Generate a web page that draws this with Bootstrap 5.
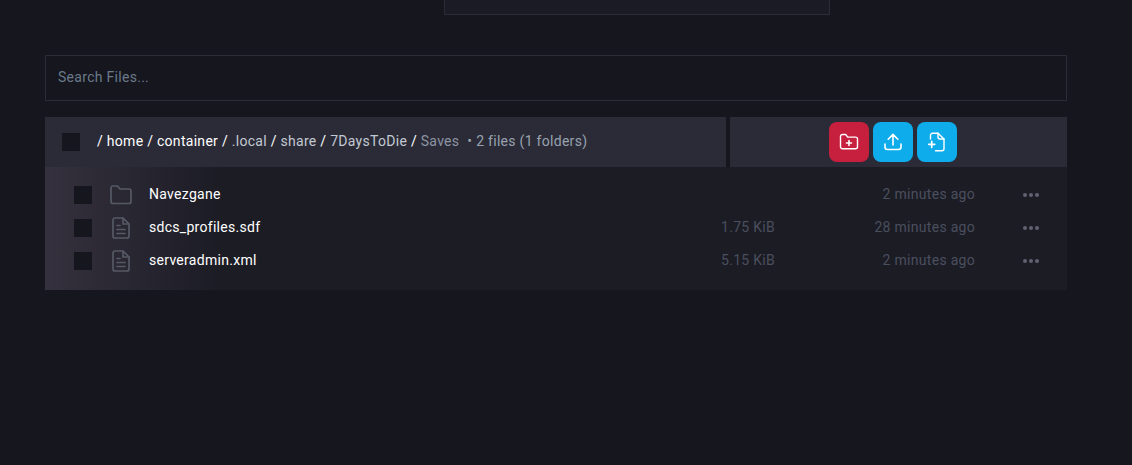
<!doctype html>
<html lang="en">
<head>
<meta charset="utf-8">
<title>Files</title>
<link href="https://cdn.jsdelivr.net/npm/bootstrap@5.3.0/dist/css/bootstrap.min.css" rel="stylesheet">
<style>
html,body{height:100%}
body{background:#15161e;font-family:Roboto,"Liberation Sans",sans-serif;font-size:14px;letter-spacing:.29px;color:#fff;overflow:hidden}
.fm-wrap{width:1022px;margin-left:45px}
.fm-topbox{width:386px;height:15px;margin-left:399px;background:#1a1b25;border:1px solid #2c2c38;border-top:0}
.fm-search{margin-top:40px;height:46px;background:#15161e;border:1px solid #2c2c38;border-radius:0;padding:0 12px 2px;font-size:14px;letter-spacing:.29px;color:#fff}
.fm-search::placeholder{color:#6b7a8a;opacity:1}
.fm-search:focus{background:#15161e;border-color:#2c2c38;box-shadow:none;color:#fff}
.fm-head{margin-top:16px;height:50px;gap:4px}
.fm-crumbs{width:681px;background:#2b2b37;padding-left:17px}
.fm-actions{flex:1;background:#2b2b37;padding-right:11px;gap:4px}
.fm-check{width:18px;height:18px;background:#15161e;flex:none}
.fm-path{margin-left:17px;color:#fff;white-space:nowrap;padding-bottom:2px}
.fm-path .fm-dim{color:#c3c9d2}
.fm-path .fm-cur{color:#8b95a3}
.fm-path .fm-count{color:#98a2b0;margin-left:8px}
.fm-btn{width:40px;height:40px;border:0;border-radius:8px;padding:0;color:#fff}
.fm-red{background:#c71f3e}
.fm-blue{background:#0faceb}
.fm-list{background:linear-gradient(90deg,#35313e 0,#1c1c25 175px);padding:11px 0 13px}
.fm-row{height:33px;padding-left:29px}
.fm-row .fm-check{margin-right:18px}
.fm-ico{width:22px;color:#555965;flex:none;margin-right:17px}
.fm-name{width:420px;color:#fff}
.fm-size{width:206px;text-align:right;color:#4a4f5e}
.fm-date{width:200px;text-align:right;color:#4a4f5e}
.fm-dots{margin-left:48px;width:16px;color:#5f6270}
</style>
</head>
<body>
<div class="fm-wrap">
  <div class="fm-topbox"></div>
  <input class="form-control fm-search" type="text" placeholder="Search Files...">
  <div class="d-flex fm-head">
    <div class="d-flex align-items-center fm-crumbs">
      <span class="fm-check"></span>
      <div class="fm-path">/ home / container / <span class="fm-dim">.local</span> / <span class="fm-dim">share</span> / <span class="fm-dim">7DaysToDie</span> / <span class="fm-cur">Saves</span><span class="fm-count">• 2 files (1 folders)</span></div>
    </div>
    <div class="d-flex align-items-center justify-content-center fm-actions">
      <button class="btn fm-btn fm-red d-flex align-items-center justify-content-center" aria-label="New folder">
        <svg width="20" height="20" viewBox="0 0 20 20" fill="none" stroke="currentColor" stroke-width="1.400" stroke-linejoin="round" stroke-linecap="round"><path d="M1.500 4.500a2 2 0 0 1 2-2h3.200l2 2.600h7.800a2 2 0 0 1 2 2v7.700a2 2 0 0 1-2 2h-13a2 2 0 0 1-2-2z"/><path d="M10 8.500v5M7.500 11h5" stroke-width="1.600"/></svg>
      </button>
      <button class="btn fm-btn fm-blue d-flex align-items-center justify-content-center" aria-label="Upload">
        <svg width="20" height="20" viewBox="0 0 20 20" fill="none" stroke="currentColor" stroke-width="1.600" stroke-linejoin="round" stroke-linecap="round"><path d="M2 12v3a2.500 2.500 0 0 0 2.500 2.500h11a2.500 2.500 0 0 0 2.500-2.500v-3"/><path d="M10 13V2.500M5.200 7.200 10 2.400l4.800 4.800"/></svg>
      </button>
      <button class="btn fm-btn fm-blue d-flex align-items-center justify-content-center" aria-label="New file">
        <svg width="20" height="20" viewBox="0 0 20 20" fill="none" stroke="currentColor" stroke-width="1.400" stroke-linejoin="round" stroke-linecap="round"><path d="M3.500 7V3.300a2 2 0 0 1 2-2h5.500L17 7v9.700a2 2 0 0 1-2 2H8.500"/><path d="M11 1.300V5a2 2 0 0 0 2 2h4"/><path d="M4.700 9.300v6M1.700 12.300h6" stroke-width="1.700"/></svg>
      </button>
    </div>
  </div>
  <div class="fm-list">
    <div class="d-flex align-items-center fm-row">
      <span class="fm-check"></span>
      <span class="fm-ico"><svg class="d-block" width="22" height="20" viewBox="0 0 22 20" fill="none" stroke="currentColor" stroke-width="1.700" stroke-linejoin="round"><path d="M1 3a2 2 0 0 1 2-2h4.500l2.500 3h9a2 2 0 0 1 2 2v10.500a2 2 0 0 1-2 2H3a2 2 0 0 1-2-2z"/></svg></span>
      <span class="fm-name">Navezgane</span>
      <span class="fm-size"></span>
      <span class="fm-date">2 minutes ago</span>
      <span class="fm-dots"><svg class="d-block" width="16" height="4" viewBox="0 0 16 4" fill="currentColor"><circle cx="2" cy="2" r="2"/><circle cx="8" cy="2" r="2"/><circle cx="14" cy="2" r="2"/></svg></span>
    </div>
    <div class="d-flex align-items-center fm-row">
      <span class="fm-check"></span>
      <span class="fm-ico"><svg class="d-block mx-auto" width="18" height="22" viewBox="0 0 18 22" fill="none" stroke="currentColor" stroke-width="1.700" stroke-linejoin="round" stroke-linecap="round"><path d="M1 3a2 2 0 0 1 2-2h8l6 6v12a2 2 0 0 1-2 2H3a2 2 0 0 1-2-2z"/><path d="M11 1v6h6M5 8.500h3M5 12.500h8M5 16.500h8"/></svg></span>
      <span class="fm-name">sdcs_profiles.sdf</span>
      <span class="fm-size">1.75 KiB</span>
      <span class="fm-date">28 minutes ago</span>
      <span class="fm-dots"><svg class="d-block" width="16" height="4" viewBox="0 0 16 4" fill="currentColor"><circle cx="2" cy="2" r="2"/><circle cx="8" cy="2" r="2"/><circle cx="14" cy="2" r="2"/></svg></span>
    </div>
    <div class="d-flex align-items-center fm-row">
      <span class="fm-check"></span>
      <span class="fm-ico"><svg class="d-block mx-auto" width="18" height="22" viewBox="0 0 18 22" fill="none" stroke="currentColor" stroke-width="1.700" stroke-linejoin="round" stroke-linecap="round"><path d="M1 3a2 2 0 0 1 2-2h8l6 6v12a2 2 0 0 1-2 2H3a2 2 0 0 1-2-2z"/><path d="M11 1v6h6M5 8.500h3M5 12.500h8M5 16.500h8"/></svg></span>
      <span class="fm-name">serveradmin.xml</span>
      <span class="fm-size">5.15 KiB</span>
      <span class="fm-date">2 minutes ago</span>
      <span class="fm-dots"><svg class="d-block" width="16" height="4" viewBox="0 0 16 4" fill="currentColor"><circle cx="2" cy="2" r="2"/><circle cx="8" cy="2" r="2"/><circle cx="14" cy="2" r="2"/></svg></span>
    </div>
  </div>
</div>
<script src="https://cdn.jsdelivr.net/npm/bootstrap@5.3.0/dist/js/bootstrap.bundle.min.js"></script>
</body>
</html>
